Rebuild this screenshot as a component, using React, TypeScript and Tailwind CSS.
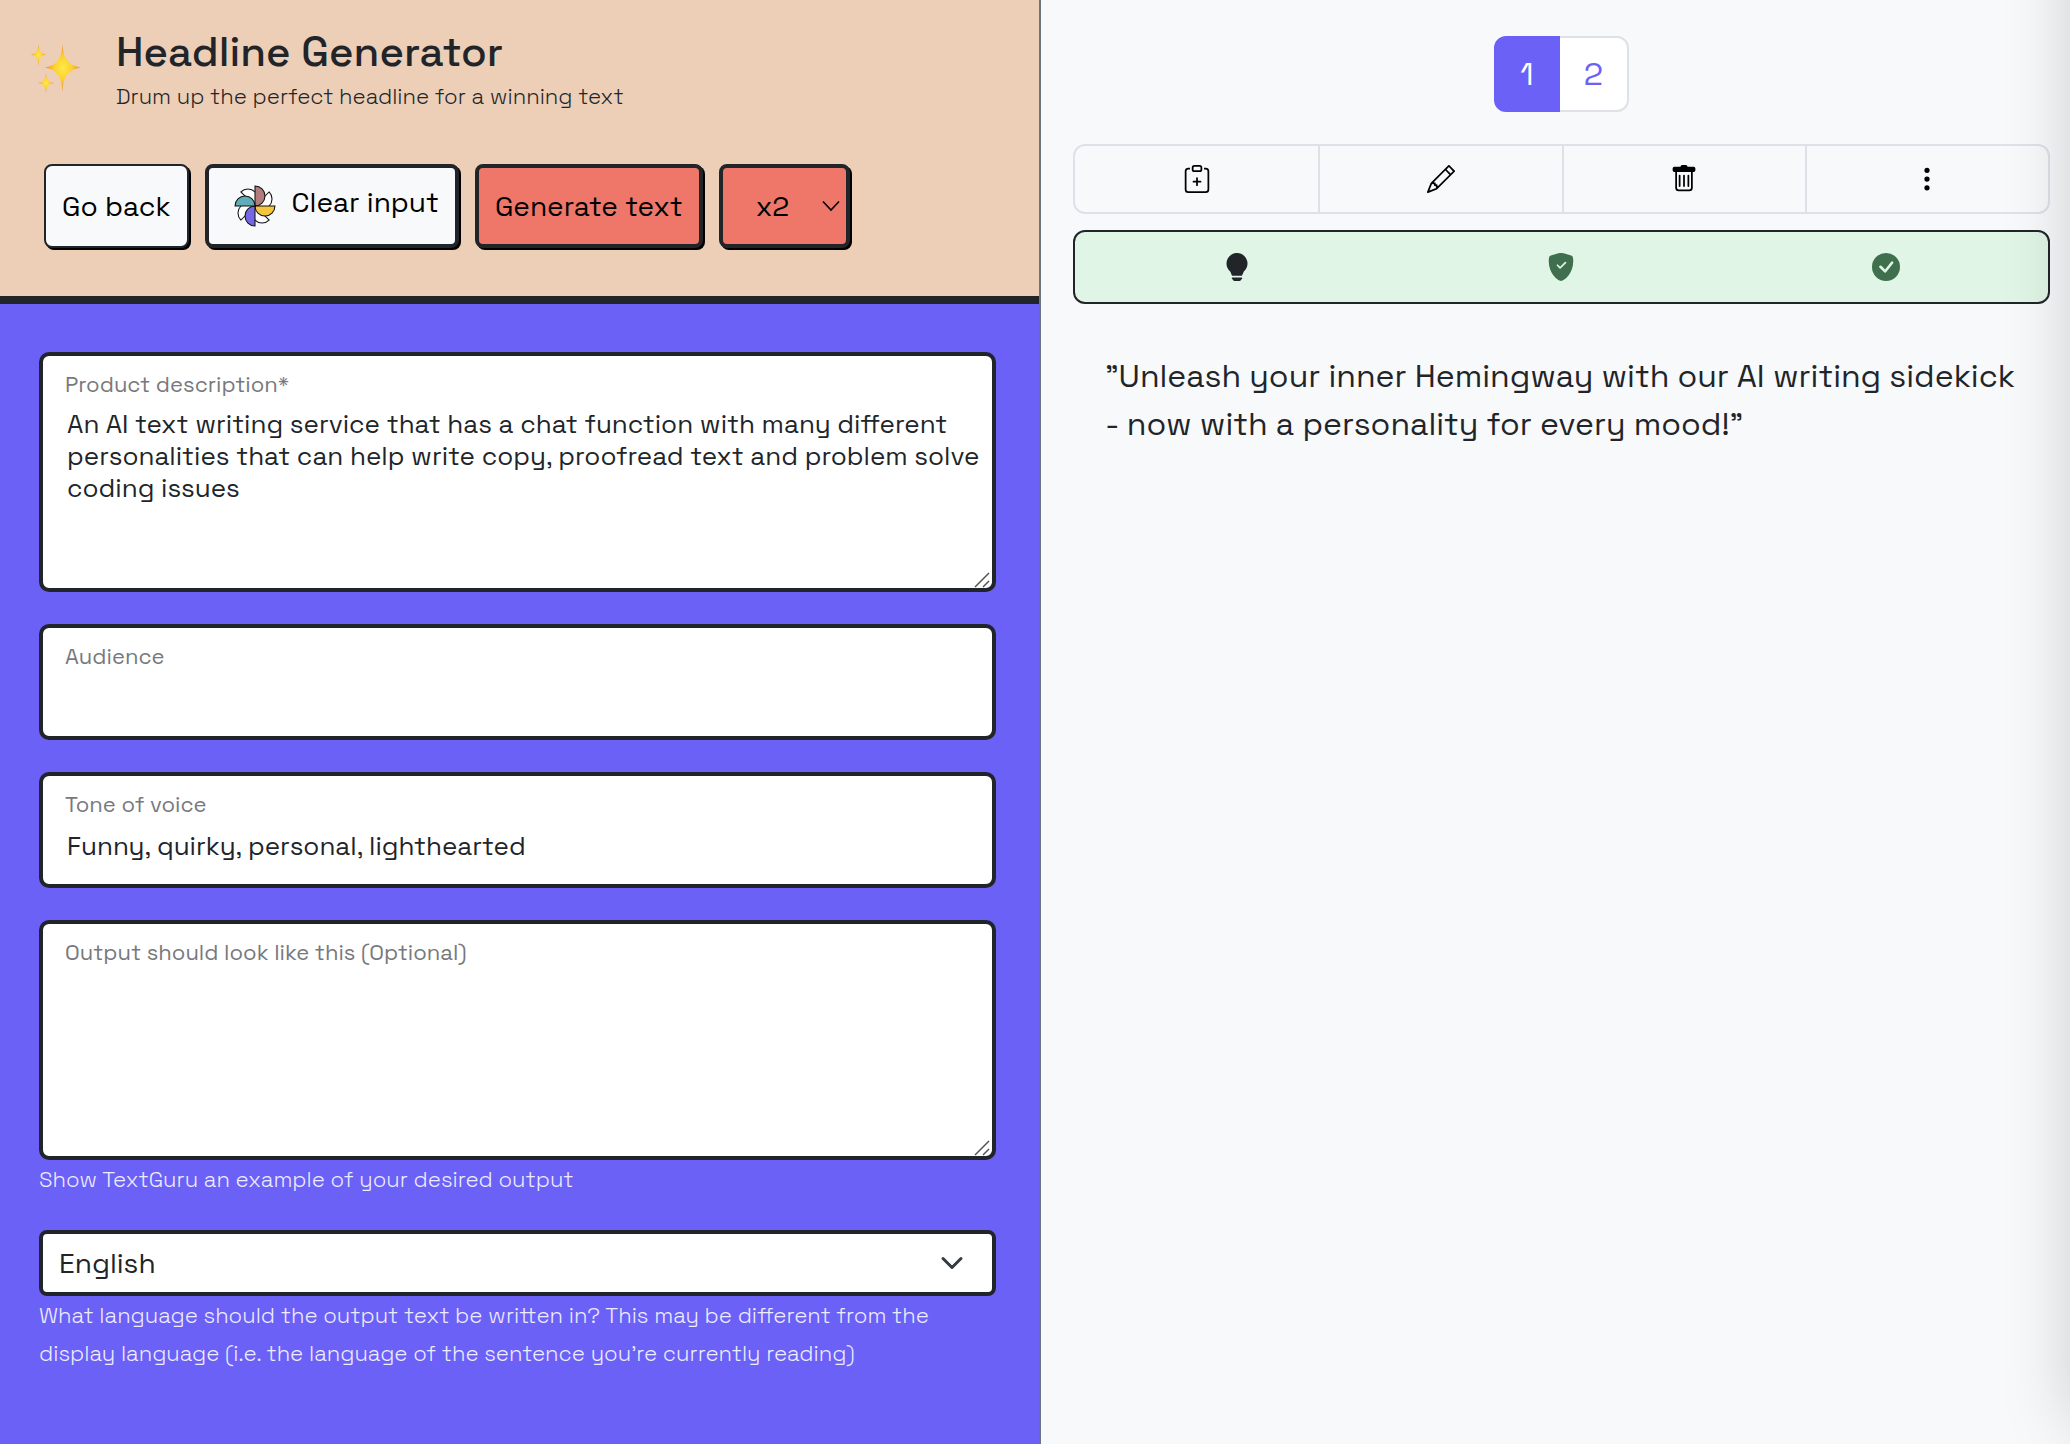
import { useState, type ReactNode } from "react";
import {
  BsCheckCircleFill,
  BsClipboardPlus,
  BsLightbulbFill,
  BsPencil,
  BsShieldFillCheck,
  BsThreeDotsVertical,
} from "react-icons/bs";

const RESULTS = [
  "”Unleash your inner Hemingway with our AI writing sidekick - now with a personality for every mood!”",
  "”Meet the AI writer with a personality for every page.”",
];

function Sparkles() {
  return (
    <svg className="mt-3" width="56" height="56" viewBox="0 0 56 56" aria-hidden="true">
      <defs>
        <radialGradient id="spark">
          <stop offset="0" stopColor="#ffe94a" />
          <stop offset="0.5" stopColor="#fcd02f" />
          <stop offset="1" stopColor="#ee8a3c" />
        </radialGradient>
      </defs>
      <g fill="url(#spark)">
        <path d="M34.5 4C35.5 18 39 25 53 27.500C39 30 35.500 37 34.500 52C33.500 37 30 30 17 27.500C30 25 33.500 18 34.500 4Z" />
        <path d="M10.500 4C11 10.500 12.500 13.500 18 14.500C12.500 15.500 11 18.500 10.500 26C10 18.500 8.500 15.500 3 14.500C8.500 13.500 10 10.500 10.500 4Z" />
        <path d="M18 33C18.600 39.500 20 42 26 43C20 44 18.600 46.500 18 53C17.400 46.500 16 44 10 43C16 42 17.400 39.500 18 33Z" />
      </g>
    </svg>
  );
}

function Pinwheel() {
  const blade = "M20 20V1A9.500 9.500 0 0 1 20 20Z";
  return (
    <svg
      className="mr-4 inline align-middle"
      width="42"
      height="42"
      viewBox="0 0 40 40"
      stroke="#111"
      strokeWidth="1"
      aria-hidden="true"
    >
      {[45, 135, 225, 315].map((deg) => (
        <path key={deg} d={blade} fill="#fff" transform={`rotate(${deg} 20 20)`} />
      ))}
      <path d={blade} fill="#b17c7c" />
      <path d={blade} fill="#f4c63d" transform="rotate(90 20 20)" />
      <path d={blade} fill="#7468e4" transform="rotate(180 20 20)" />
      <path d={blade} fill="#5fadb9" transform="rotate(270 20 20)" />
    </svg>
  );
}

function Trash() {
  return (
    <svg width="28" height="28" viewBox="0 0 16 16" fill="currentColor" aria-hidden="true">
      <path d="M5.500 5.500A.5.500 0 0 1 6 6v6a.5.500 0 0 1-1 0V6a.5.500 0 0 1 .5-.5m2.500 0a.5.500 0 0 1 .5.500v6a.5.500 0 0 1-1 0V6a.5.500 0 0 1 .5-.5m3 .5a.5.500 0 0 0-1 0v6a.5.500 0 0 0 1 0z" />
      <path d="M14.500 3a1 1 0 0 1-1 1H13v9a2 2 0 0 1-2 2H5a2 2 0 0 1-2-2V4h-.5a1 1 0 0 1-1-1V2a1 1 0 0 1 1-1H6a1 1 0 0 1 1-1h2a1 1 0 0 1 1 1h3.500a1 1 0 0 1 1 1zM4.118 4 4 4.059V13a1 1 0 0 0 1 1h6a1 1 0 0 0 1-1V4.059L11.882 4z" />
    </svg>
  );
}

function ResizeGrip() {
  return (
    <svg
      className="pointer-events-none absolute right-0.5 bottom-0"
      width="16"
      height="16"
      viewBox="0 0 16 16"
      stroke="#555"
      strokeWidth="1.5"
      aria-hidden="true"
    >
      <path d="M1 15 15 1M9 15l6-6" />
    </svg>
  );
}

type FieldProps = {
  id: string;
  label: string;
  value: string;
  onChange: (value: string) => void;
  multiline?: boolean;
};

function Field({ id, label, value, onChange, multiline }: FieldProps) {
  return (
    <div className="relative rounded-[10px] border-4 border-[#212529] bg-white pt-3 pr-2 pl-[22px]">
      <label htmlFor={id} className="block text-[22px] leading-8 text-[#77797c]">
        {label}
      </label>
      {multiline ? (
        <>
          <textarea
            id={id}
            value={value}
            onChange={(e) => onChange(e.target.value)}
            className="mt-2 block h-[180px] w-full resize-none pl-0.5 text-[26px] leading-8 outline-none"
          />
          <ResizeGrip />
        </>
      ) : (
        <input
          id={id}
          value={value}
          onChange={(e) => onChange(e.target.value)}
          className="mt-2 mb-5 block h-9 w-full pl-0.5 text-[26px] leading-8 outline-none"
        />
      )}
    </div>
  );
}

function ToolButton({ label, children }: { label: string; children: ReactNode }) {
  return (
    <button
      aria-label={label}
      className="flex h-[66px] items-center justify-center border-l-2 border-[#dfe1e8] text-black first:border-l-0"
    >
      {children}
    </button>
  );
}

export default function App() {
  const [description, setDescription] = useState(
    "An AI text writing service that has a chat function with many different personalities that can help write copy, proofread text and problem solve coding issues"
  );
  const [audience, setAudience] = useState("");
  const [tone, setTone] = useState("Funny, quirky, personal, lighthearted");
  const [example, setExample] = useState("");
  const [page, setPage] = useState(1);

  const clearInput = () => {
    setDescription("");
    setAudience("");
    setTone("");
    setExample("");
  };

  return (
    <div className="relative grid min-h-screen grid-cols-[1041fr_1029fr] overflow-hidden bg-[#f8f9fb] font-['Space_Grotesk','Inter',sans-serif] text-[#212529]">
      <section className="flex flex-col border-r-2 border-[#6c757d]">
        <header className="border-b-8 border-[#212529] bg-[#edceb7] pt-7 pb-12">
          <div className="flex items-start gap-8 pl-7">
            <Sparkles />
            <div>
              <h1 className="text-[42px] leading-12 font-medium">Headline Generator</h1>
              <p className="mt-1 text-[22px] leading-8 font-light">
                Drum up the perfect headline for a winning text
              </p>
            </div>
          </div>

          <div className="mt-[52px] flex h-[84px] gap-4 pl-11 text-[28px] text-black">
            <button className="rounded-lg border-2 border-[#212529] bg-[#f8f9fb] px-4 shadow-[2px_2px_0_#000]">
              Go back
            </button>
            <button
              onClick={clearInput}
              className="rounded-lg border-4 border-[#212529] bg-[#f8f9fb] pr-4 pb-1 pl-[25px] shadow-[2px_2px_0_#000]"
            >
              <Pinwheel />
              Clear input
            </button>
            <button className="rounded-lg border-4 border-[#212529] bg-[#ee7769] px-4 shadow-[2px_2px_0_#000]">
              Generate text
            </button>
            <div className="relative">
              <select
                aria-label="Number of texts"
                defaultValue="x2"
                className="h-full w-[131px] appearance-none rounded-lg border-4 border-[#212529] bg-[#ee7769] pl-[33px] shadow-[2px_2px_0_#000]"
              >
                <option>x1</option>
                <option>x2</option>
                <option>x3</option>
              </select>
              <svg
                className="pointer-events-none absolute top-9 right-2.5"
                width="18"
                height="12"
                viewBox="0 0 18 12"
                fill="none"
                stroke="#000"
                strokeWidth="1.6"
                aria-hidden="true"
              >
                <path d="M1 1.500 9 10l8-8.500" />
              </svg>
            </div>
          </div>
        </header>

        <form className="flex-1 bg-[#6c61f6] pt-12 pr-[43px] pb-16 pl-[39px]">
          <div className="flex flex-col gap-8">
            <Field
              id="description"
              label="Product description*"
              value={description}
              onChange={setDescription}
              multiline
            />
            <Field id="audience" label="Audience" value={audience} onChange={setAudience} />
            <Field id="tone" label="Tone of voice" value={tone} onChange={setTone} />
            <div>
              <Field
                id="example"
                label="Output should look like this (Optional)"
                value={example}
                onChange={setExample}
                multiline
              />
              <p className="text-[22px] leading-[38px] font-light text-[#eeedff]">
                Show TextGuru an example of your desired output
              </p>
            </div>
            <div>
              <div className="relative">
                <select
                  aria-label="Output language"
                  className="block h-[66px] w-full appearance-none rounded-lg border-4 border-[#212529] bg-white pl-4 text-[28px]"
                >
                  <option>English</option>
                  <option>Dansk</option>
                  <option>Deutsch</option>
                </select>
                <svg
                  className="pointer-events-none absolute top-[26px] right-8"
                  width="24"
                  height="14"
                  viewBox="0 0 24 14"
                  fill="none"
                  stroke="#343a40"
                  strokeWidth="3"
                  strokeLinecap="round"
                  strokeLinejoin="round"
                  aria-hidden="true"
                >
                  <path d="m3 2.500 9 9 9-9" />
                </svg>
              </div>
              <p className="text-[22px] leading-[38px] font-light text-[#eeedff]">
                What language should the output text be written in? This may be different from the
                display language (i.e. the language of the sentence you’re currently reading)
              </p>
            </div>
          </div>
        </form>
      </section>

      <main className="pt-9 pr-5 pl-8">
        <nav aria-label="Results" className="flex justify-center text-[32px]">
          <button
            onClick={() => setPage(1)}
            className={`h-[76px] w-[66px] rounded-l-xl border-2 ${
              page === 1
                ? "border-[#6c61f6] bg-[#6c61f6] text-white"
                : "border-[#dee2e6] bg-white text-[#6c61f6]"
            }`}
          >
            1
          </button>
          <button
            onClick={() => setPage(2)}
            className={`h-[76px] w-[69px] rounded-r-xl border-2 border-l-0 ${
              page === 2
                ? "border-[#6c61f6] bg-[#6c61f6] text-white"
                : "border-[#dee2e6] bg-white text-[#6c61f6]"
            }`}
          >
            2
          </button>
        </nav>

        <div className="mt-8 grid grid-cols-4 rounded-xl border-2 border-[#dfe1e8]">
          <ToolButton label="Copy">
            <BsClipboardPlus size={28} />
          </ToolButton>
          <ToolButton label="Edit">
            <BsPencil size={28} />
          </ToolButton>
          <ToolButton label="Delete">
            <Trash />
          </ToolButton>
          <ToolButton label="More">
            <BsThreeDotsVertical size={28} />
          </ToolButton>
        </div>

        <div className="mt-4 grid h-[74px] grid-cols-3 place-items-center rounded-xl border-2 border-[#212529] bg-[#e1f5e7] text-[#3f6f4c]">
          <BsLightbulbFill size={28} className="text-[#212529]" />
          <BsShieldFillCheck size={28} />
          <BsCheckCircleFill size={28} />
        </div>

        <p className="mt-12 px-8 text-[32px] leading-12">{RESULTS[page - 1]}</p>
      </main>

      {/* Closed side drawer, only its shadow reaches into the page */}
      <div className="pointer-events-none absolute -top-20 bottom-5 left-full w-80 shadow-[0_0_64px_rgba(0,0,0,0.175)]" />
    </div>
  );
}
